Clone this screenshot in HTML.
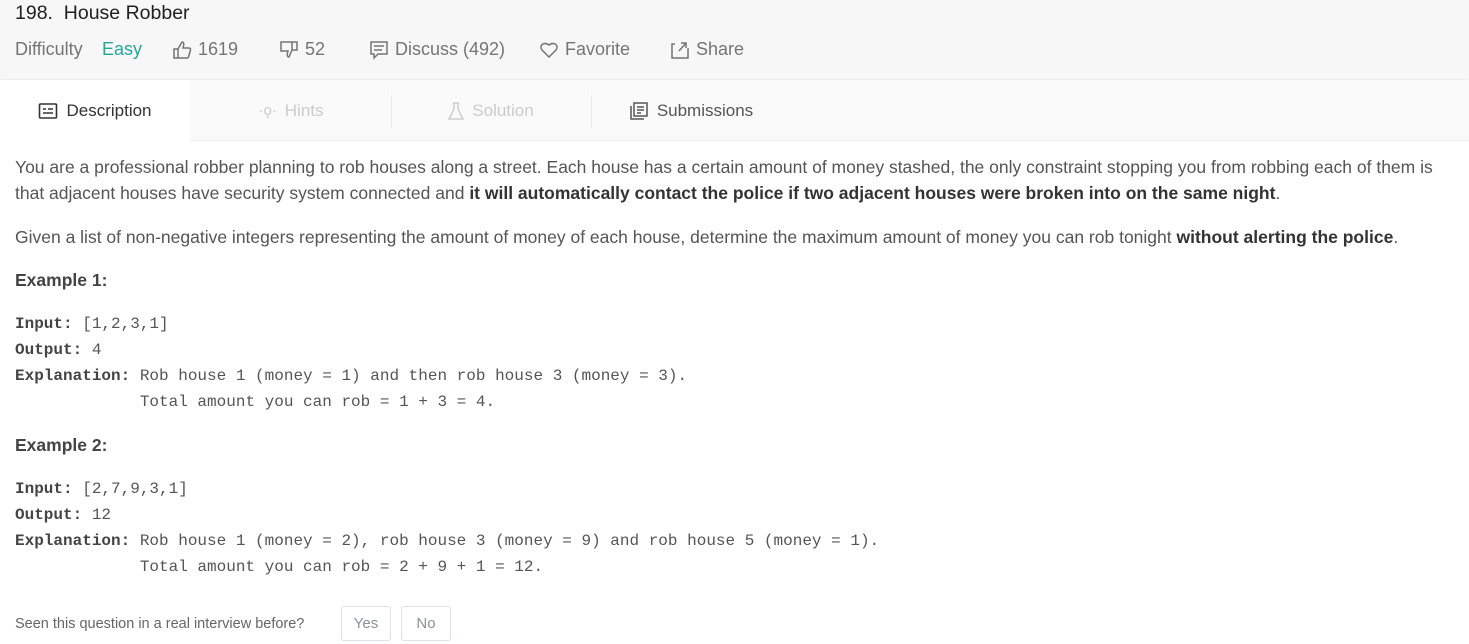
<!DOCTYPE html>
<html><head><meta charset="utf-8"><style>
*{margin:0;padding:0;box-sizing:border-box}
body{width:1469px;height:644px;overflow:hidden;background:#fff;font-family:"Liberation Sans",sans-serif;color:#424242;position:relative}
.hdr{position:absolute;left:0;top:0;width:1469px;height:79px;background:#f7f7f7;box-shadow:0 1px 3px rgba(0,0,0,.12)}
.t{position:absolute;left:15px;top:2px;font-size:19.5px;color:#212121}
.meta{position:absolute;top:39px;font-size:18px;color:#757575;display:flex;align-items:center;gap:6px}
.tabs{position:absolute;top:80px;left:0;width:1469px;height:61px;background:#fafafa;border-bottom:1px solid #eee}
.tab{position:absolute;top:0;height:61px;display:flex;align-items:center;justify-content:center;font-size:17px;gap:8px}
.sep{position:absolute;top:15px;width:1px;height:32px;background:#e8e8e8}
.p{position:absolute;left:15px;font-size:17.5px;line-height:26px;color:#555}
b{color:#333}
.h{position:absolute;left:15px;font-size:17.5px;font-weight:bold;color:#444}
pre{position:absolute;left:15px;font-family:"Liberation Mono",monospace;font-size:16px;line-height:26px;color:#555}
pre b{color:#444}
.btn{position:absolute;top:606px;height:35px;border:1px solid #dde3e8;border-radius:3px;font-size:15px;color:#8a9199;display:flex;align-items:center;justify-content:center}
</style></head><body>
<div class="hdr">
<div class="t">198.&nbsp; House Robber</div>
<div class="meta" style="left:15px">Difficulty</div>
<div class="meta" style="left:102px;color:#26a69a">Easy</div>
<div class="meta" style="left:172px"><svg width="20" height="20" viewBox="0 0 20 20" fill="none" stroke="#757575" stroke-width="1.5"><path d="M2 9h4v9H2zM6 9l4-7c2 0 2 2 1.5 4L11 8h6c1 0 2 1 1.5 2l-2 7c-.3 1-1 1-2 1H6"/></svg>1619</div>
<div class="meta" style="left:279px"><svg width="20" height="20" viewBox="0 0 20 20" fill="none" stroke="#757575" stroke-width="1.5"><path d="M2 2h16v8h-5l-3 7c-2 0-2-2-1.5-4L9 11H2zM13 2v8"/></svg>52</div>
<div class="meta" style="left:369px"><svg width="20" height="20" viewBox="0 0 20 20" fill="none" stroke="#757575" stroke-width="1.5"><path d="M2 2h16v12H9l-4 4v-4H2zM5 6h10M5 10h8"/></svg>Discuss (492)</div>
<div class="meta" style="left:539px"><svg width="20" height="20" viewBox="0 0 20 20" fill="none" stroke="#757575" stroke-width="1.5"><path d="M10 17L3 10C0 6 4 1 10 5c6-4 10 1 7 5z"/></svg>Favorite</div>
<div class="meta" style="left:670px"><svg width="20" height="20" viewBox="0 0 20 20" fill="none" stroke="#757575" stroke-width="1.5"><path d="M5 4H2v14h16V8M9 11l7-8M11 3h5v5"/></svg>Share</div>
</div>
<div class="tabs">
<div class="tab" style="left:0;width:190px;background:#fff;color:#333;height:62px"><svg width="20" height="18" viewBox="0 0 20 18" fill="none" stroke="#333" stroke-width="1.6"><rect x="1.5" y="2" width="17" height="14" rx="1"/><path d="M5 7h3M10 7h5M5 11h10"/></svg>Description</div>
<div class="tab" style="left:191px;width:200px;color:#ccc"><span style="font-size:15px">·ǫ·</span>Hints</div>
<div class="sep" style="left:391px"></div>
<div class="tab" style="left:391px;width:200px;color:#ccc"><svg width="16" height="18" viewBox="0 0 16 18" fill="none" stroke="#ccc" stroke-width="1.5"><path d="M5 1h6M6 1v6L1 17h14L10 7V1"/></svg>Solution</div>
<div class="sep" style="left:591px"></div>
<div class="tab" style="left:591px;width:200px;color:#555"><svg width="20" height="20" viewBox="0 0 20 20" fill="none" stroke="#555" stroke-width="1.5"><rect x="5" y="2" width="13" height="13"/><path d="M2 5v13h13M8 6h7M8 9h7M8 12h4"/></svg>Submissions</div>
</div>
<div class="p" style="top:154px;width:1450px">You are a professional robber planning to rob houses along a street. Each house has a certain amount of money stashed, the only constraint stopping you from robbing each of them is<br>that adjacent houses have security system connected and <b>it will automatically contact the police if two adjacent houses were broken into on the same night</b>.</div>
<div class="p" style="top:224px;white-space:nowrap">Given a list of non-negative integers representing the amount of money of each house, determine the maximum amount of money you can rob tonight <b>without alerting the police</b>.</div>
<div class="h" style="top:270px">Example 1:</div>
<pre style="top:311px"><b>Input:</b> [1,2,3,1]
<b>Output:</b> 4
<b>Explanation:</b> Rob house 1 (money = 1) and then rob house 3 (money = 3).
             Total amount you can rob = 1 + 3 = 4.</pre>
<div class="h" style="top:435px">Example 2:</div>
<pre style="top:476px"><b>Input:</b> [2,7,9,3,1]
<b>Output:</b> 12
<b>Explanation:</b> Rob house 1 (money = 2), rob house 3 (money = 9) and rob house 5 (money = 1).
             Total amount you can rob = 2 + 9 + 1 = 12.</pre>
<div style="position:absolute;left:15px;top:616px;font-size:14.5px;color:#666">Seen this question in a real interview before?</div>
<div class="btn" style="left:341px;width:50px">Yes</div>
<div class="btn" style="left:401px;width:50px">No</div>
</body></html>
